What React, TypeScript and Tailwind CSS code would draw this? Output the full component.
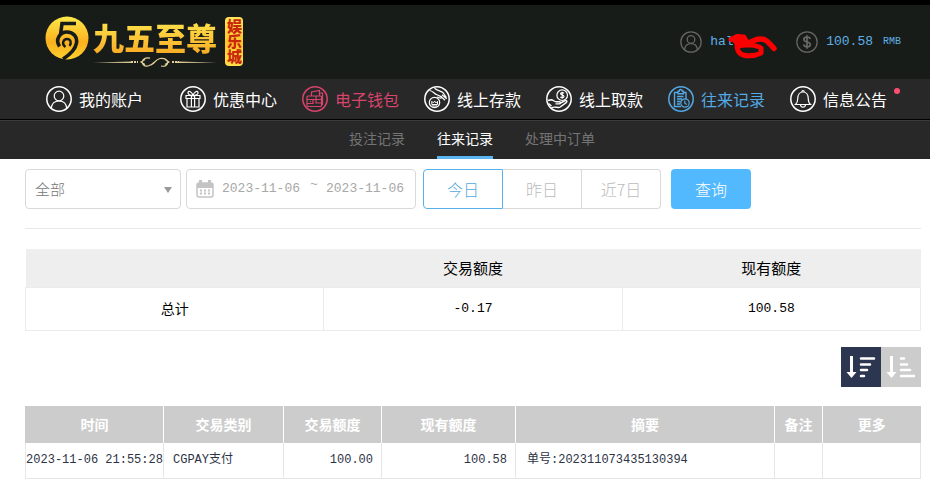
import { useState } from "react";
import type { ReactNode } from "react";

type NavItem = {
  label: string;
  icon: ReactNode;
  className: string;
  dot?: boolean;
};

type RecordRow = {
  time: string;
  type: string;
  amount: string;
  balance: string;
  summary: string;
};

const navItems: NavItem[] = [
  {
    label: "我的账户",
    className: "text-white mr-3",
    icon: (
      <>
        <circle cx="13" cy="10" r="4.8" />
        <path d="M5.2 22.5C5.6 17.8 8.6 15 13 15s7.4 2.8 7.8 7.5" />
      </>
    ),
  },
  {
    label: "优惠中心",
    className: "text-white",
    icon: (
      <>
        <path d="M6 9.5h14v3H6zM7 12.5h12v8.5H7zM11.4 9.5V21M14.6 9.5V21" />
        <path d="M13 9.5C10.5 9.5 7.5 8.5 8 6.4c.6-2.2 4-.6 5 3.1 1-3.7 4.4-5.3 5-3.1.5 2.1-2.5 3.1-5 3.1z" />
      </>
    ),
  },
  {
    label: "电子钱包",
    className: "text-[#d8446c]",
    icon: (
      <>
        <rect x="5" y="10" width="14.5" height="10.5" rx="1" />
        <path d="M9.5 10V6l8-1.500V10M17.500 7H20.500v11.500h-1M5 13.500h6v4H5M14 10v7h5.500M11 13.500h8.500M8.500 15v1" />
      </>
    ),
  },
  {
    label: "线上存款",
    className: "text-white",
    icon: (
      <>
        <circle cx="10.5" cy="16.5" r="5.2" />
        <path d="M7.8 18.5v-3.2l1.6 1.6 1.3-1.8 1.3 1.8 1.5-1.6v3.2zM7.8 20h5.5" strokeWidth="1" />
        <path d="M5.5 4.5c3.5.2 4.500 3.300 7.500 4.300l4 1.800c1.200.8.4 1.800-1 1.400l-3-1M10.500 2.200c3 2.800 6.200 2.500 8.700 4.600l3.200 4.800M17 10.500l4 3.700M18 8.700l4.700 4" />
      </>
    ),
  },
  {
    label: "线上取款",
    className: "text-white",
    icon: (
      <>
        <circle cx="16.2" cy="9.2" r="5.3" />
        <path d="M18 7.4c-.8-1-3.4-1-3.4.4 0 1.6 3.4.9 3.4 2.6 0 1.5-2.8 1.5-3.6.4M16.2 5.8v6.9" strokeWidth="1.200" />
        <path
          d="M2 14.5l3-.8c2.3 0 3 2.1 5 2.1h3.2c1.8.2 1.5 2.1 0 2.1H9.5M14.5 17l4.8-2.3c1.5-.5 2.2 1 .9 1.9l-6 4.4c-2.2 1.3-4.6-.5-7.2.3l-1.7.6M2.5 17.5l3 2.5"
          strokeWidth="1.400"
        />
      </>
    ),
  },
  {
    label: "往来记录",
    className: "text-[#53a9e5]",
    icon: (
      <>
        <path
          d="M13 20.5H6.5V6.5H10M15.5 6.5H18v6.5M10 5.2h1.2c.2-2.2 2.9-2.2 3.1 0h1.2v2.6H10zM9 10.5h6.5M9 13h5M9 15.5h3.5M9 18h3"
          strokeWidth="1.400"
        />
        <circle cx="17" cy="17" r="4.2" />
        <path d="M16.8 14.5v2.7l2 1.3" />
      </>
    ),
  },
  {
    label: "信息公告",
    className: "text-white",
    dot: true,
    icon: (
      <>
        <path d="M5.5 18.5c2-1.7 2.3-3.4 2.3-6.3 0-3.5 2-6.2 5.2-6.2s5.2 2.7 5.2 6.2c0 2.9.3 4.6 2.3 6.3z" />
        <path d="M11.8 6c0-2 2.4-2 2.4 0M10.5 18.7c.3 3.2 4.7 3.2 5 0" />
      </>
    ),
  },
];

const subTabs = ["投注记录", "往来记录", "处理中订单"];
const ranges = ["今日", "昨日", "近7日"];

const records: RecordRow[] = [
  {
    time: "2023-11-06 21:55:28",
    type: "CGPAY支付",
    amount: "100.00",
    balance: "100.58",
    summary: "单号:202311073435130394",
  },
];

function Logo() {
  return (
    <a href="#home" className="flex items-start font-['Noto_Sans_CJK_SC',sans-serif]">
      <svg width="44" height="44" viewBox="0 0 44 44" className="mt-px shrink-0">
        <defs>
          <linearGradient id="gold" x1="0" y1="0" x2="0" y2="1">
            <stop offset="0" stopColor="#ffe94a" />
            <stop offset="0.6" stopColor="#fbb01e" />
            <stop offset="1" stopColor="#ffd22e" />
          </linearGradient>
        </defs>
        <circle cx="22" cy="22" r="21.5" fill="url(#gold)" />
        <path d="M31 7.500H17L15.500 19" fill="none" stroke="#181c18" strokeWidth="3.600" />
        <path
          d="M14.500 30.500C10 24 14.500 16 22 16c6.500 0 10.500 5 9.500 11C30.500 33.500 25 38.500 18 43"
          fill="none"
          stroke="#181c18"
          strokeWidth="3.600"
        />
        <path d="M20.500 31c-4.500-3-2-8 1.500-8s5 3.500 2.500 7" fill="none" stroke="#181c18" strokeWidth="2.400" />
      </svg>
      <div className="ml-1 flex flex-col">
        <span className="bg-gradient-to-b from-[#ffee52] to-[#f6a21b] bg-clip-text text-[31px] leading-[44px] font-black text-transparent">
          九五至尊
        </span>
        <svg width="124" height="10" viewBox="0 0 124 10" fill="none" stroke="#e3cf9b" className="-mt-0.5">
          <path d="M0 5.500L40 4.500v1.500zM124 5.500L84 4.500v1.500z" fill="#e3cf9b" stroke="none" />
          <path d="M38 5h7M79 5h7" strokeWidth="2" strokeDasharray="2 1" />
          <path
            d="M57 1.200c-10-2-10 9-2 7.800 6-1 7-6.500 12-7.500 10-1.500 10 9.500 1 7.500M58 8c4-1 4-5.500 8-6M52 2.500l-4 2.500 4 2.500M72 2.500l4 2.500-4 2.500"
            strokeWidth="1.200"
          />
        </svg>
      </div>
      <span className="mt-0.5 ml-2 flex h-[49px] w-[18px] items-center justify-center rounded-[4px] bg-gradient-to-b from-[#ffe75a] via-[#ffc526] to-[#ffdf4a]">
        <span className="text-[15px] leading-[18px] font-black whitespace-nowrap text-[#c8280c] [writing-mode:vertical-rl]">娱乐城</span>
      </span>
    </a>
  );
}

function SortIcon({ asc }: { asc?: boolean }) {
  return (
    <svg width="30" height="24" viewBox="0 0 30 24" fill="none" stroke="#fff" strokeLinecap="round" strokeWidth="2.500">
      <path d="M5.500 1v17" strokeWidth="3" strokeLinecap="butt" />
      <path d="M.5 17h10l-5 6z" fill="#fff" stroke="none" />
      {asc ? (
        <path d="M15 3.500h3M15 9.500h6M15 15h9M15 21h13" />
      ) : (
        <path d="M15 3.500h13M15 9.500h9M15 15h6M15 21h3" />
      )}
    </svg>
  );
}

export default function App() {
  const [tab, setTab] = useState("往来记录");
  const [range, setRange] = useState("今日");
  const [asc, setAsc] = useState(false);
  const [from, setFrom] = useState("2023-11-06");
  const [to, setTo] = useState("2023-11-06");

  return (
    <div className="bg-white font-['Liberation_Mono','Noto_Sans_CJK_SC',monospace] text-[#333]">
      <header className="border-t-[5px] border-black bg-[#181c18]">
        <div className="flex h-[74px] items-start justify-between pt-[10px] pr-[29px] pl-[45px]">
          <Logo />
          <div className="mt-4 flex items-center text-[13px] leading-[22px] text-[#5fb0e6]">
            <div className="relative flex items-center">
              <svg width="22" height="22" viewBox="0 0 26 26" fill="none" stroke="#656765" strokeWidth="1.500" className="mr-2">
                <circle cx="13" cy="13" r="12" />
                <circle cx="13" cy="10" r="4.500" />
                <path d="M5.500 21.500c.5-4 3.300-6.500 7.500-6.500s7 2.500 7.500 6.500" />
              </svg>
              <span className="w-[86px]">hal</span>
              <svg width="52" height="30" viewBox="0 0 52 30" fill="none" stroke="#fb0000" strokeLinecap="round" strokeLinejoin="round" className="absolute top-0 left-[47px]">
                <path d="M4 8.500l6-3 7 .5 2 4-10 1" strokeWidth="5" />
                <path d="M8 9.500l15 2c5-3 11-5 16-2 3 2 5 4.500 8 8" strokeWidth="5.500" />
                <path d="M10 11c0 6 0 11 6 13 6 1.500 13 .500 18-2v-5c-4-3-16-4-22-2" strokeWidth="5" />
              </svg>
            </div>
            <svg width="22" height="22" viewBox="0 0 26 26" fill="none" stroke="#656765" strokeWidth="1.500" className="mr-2">
              <circle cx="13" cy="13" r="12" />
              <path d="M17 9.500C16 6.500 9.300 6.500 9.300 10c0 4 7.700 2 7.700 6 0 3.500-7 3.500-8 0M13 5v16" strokeWidth="2" />
            </svg>
            <span>100.58</span>
            <span className="ml-2.5 text-[10px]">RMB</span>
          </div>
        </div>
      </header>

      <nav className="flex h-[41px] items-center gap-[25px] border-b border-black bg-[#282828] pl-[46px] font-['Noto_Sans_CJK_SC',sans-serif] text-[16px]">
        {navItems.map((item) => (
          <a key={item.label} href="#nav" className={`relative flex shrink-0 items-center gap-[7px] ${item.className}`}>
            <svg width="26" height="26" viewBox="0 0 26 26" fill="none" stroke="currentColor" strokeWidth="1.200">
              <circle cx="13" cy="13" r="12.200" strokeWidth="1.500" />
              {item.icon}
            </svg>
            <span>{item.label}</span>
            {item.dot && <span className="absolute top-0.5 -right-[13px] size-1.5 rounded-full bg-[#fb5070]" />}
          </a>
        ))}
      </nav>

      <div className="flex h-[39px] justify-center gap-8 border-t border-[#3a3a3a] bg-[#282828] pl-[14px] font-['Noto_Sans_CJK_SC',sans-serif] text-[14px]">
        {subTabs.map((t) => (
          <button
            key={t}
            type="button"
            onClick={() => setTab(t)}
            className={`border-b-[3px] ${t === tab ? "border-[#5cb5f0] text-white" : "border-transparent text-[#747474]"}`}
          >
            {t}
          </button>
        ))}
      </div>

      <main className="pr-[9px] pl-[25px]">
        <div className="flex h-[70px] items-start border-b border-[#e8e8e8] pt-[10px] font-['Noto_Sans_CJK_SC',sans-serif] text-[16px] font-light">
          <div className="relative mr-[5px]">
            <select
              aria-label="交易类别"
              className="h-10 w-[156px] appearance-none rounded-[4px] border border-[#d9d9d9] bg-white pl-[9px] text-[15px] text-[#777]"
            >
              <option>全部</option>
            </select>
            <span className="pointer-events-none absolute top-[18px] right-[9px] border-x-4 border-t-[6px] border-x-transparent border-t-[#999]" />
          </div>
          <div className="mr-[7px] flex h-10 w-[230px] items-center rounded-[4px] border border-[#d9d9d9] pl-[9px] font-['Liberation_Mono',monospace] text-[13px] text-[#a8a8a8]">
            <svg width="18" height="18" viewBox="0 0 18 18" className="mr-2 shrink-0">
              <rect x="1" y="3" width="16" height="14" rx="2" fill="none" stroke="#c4c4c4" strokeWidth="1.500" />
              <path d="M1 3h16v5H1zM3 0h3v5H3zM12 0h3v5h-3z" fill="#c4c4c4" />
              <path d="M4 10.500h10M4 13.500h10" stroke="#c4c4c4" strokeWidth="2" strokeDasharray="2 2" />
            </svg>
            <input aria-label="开始日期" value={from} onChange={(e) => setFrom(e.target.value)} className="w-20 bg-transparent outline-none" />
            <span className="w-6 pb-2 text-center">~</span>
            <input aria-label="结束日期" value={to} onChange={(e) => setTo(e.target.value)} className="w-20 bg-transparent outline-none" />
          </div>
          <div className="mr-[10px] flex">
            {ranges.map((r) => (
              <button
                key={r}
                type="button"
                onClick={() => setRange(r)}
                className={`h-10 border first:w-20 first:rounded-l-[4px] last:rounded-r-[4px] not-first:w-[79px] not-first:border-l-0 ${
                  r === range ? "border-[#5ab0ea] text-[#53a9e0]" : "border-[#d9d9d9] text-[#bbb]"
                }`}
              >
                {r}
              </button>
            ))}
          </div>
          <button type="button" className="h-10 w-20 rounded-[4px] bg-[#52b9ff] text-white">
            查询
          </button>
        </div>

        <table className="mt-5 w-full table-fixed border-collapse text-center text-[15px] text-black">
          <thead>
            <tr className="h-[38px] bg-[#eee] font-['Noto_Sans_CJK_SC',sans-serif]">
              <th className="font-normal" />
              <th className="font-normal">交易额度</th>
              <th className="font-normal">现有额度</th>
            </tr>
          </thead>
          <tbody>
            <tr className="h-[43px]">
              <td className="border border-[#ebebeb] font-['Noto_Sans_CJK_SC',sans-serif] text-[14px]">总计</td>
              <td className="border border-[#ebebeb] text-[13px]">-0.17</td>
              <td className="border border-[#ebebeb] text-[13px]">100.58</td>
            </tr>
          </tbody>
        </table>

        <div className="mt-4 flex justify-end">
          <button
            type="button"
            aria-label="降序"
            onClick={() => setAsc(false)}
            className={`flex size-10 items-center justify-center ${asc ? "bg-[#ccc]" : "bg-[#2d3650]"}`}
          >
            <SortIcon />
          </button>
          <button
            type="button"
            aria-label="升序"
            onClick={() => setAsc(true)}
            className={`flex size-10 items-center justify-center ${asc ? "bg-[#2d3650]" : "bg-[#ccc]"}`}
          >
            <SortIcon asc />
          </button>
        </div>

        <table className="mt-[19px] w-full table-fixed border-collapse text-[12px] whitespace-nowrap">
          <colgroup>
            <col className="w-[138px]" />
            <col className="w-[120px]" />
            <col className="w-[98px]" />
            <col className="w-[134px]" />
            <col />
            <col className="w-[48px]" />
            <col className="w-[98px]" />
          </colgroup>
          <thead>
            <tr className="h-[37px] bg-[#ccc] font-['Noto_Sans_CJK_SC',sans-serif] text-[14px] text-white">
              {["时间", "交易类别", "交易额度", "现有额度", "摘要", "备注", "更多"].map((h) => (
                <th key={h} className="border-r border-white font-bold first:border-l first:border-l-[#ccc] last:border-r-0">
                  {h}
                </th>
              ))}
            </tr>
          </thead>
          <tbody>
            {records.map((r) => (
              <tr key={r.summary} className="h-9 border-b border-[#e6e6e6] text-[#2d3345] *:border-x *:border-[#e6e6e6]">
                <td className="text-center">{r.time}</td>
                <td className="pl-[9px]">{r.type}</td>
                <td className="pr-2 text-right">{r.amount}</td>
                <td className="pr-2 text-right">{r.balance}</td>
                <td className="pl-[11px]">{r.summary}</td>
                <td />
                <td />
              </tr>
            ))}
          </tbody>
        </table>
      </main>
    </div>
  );
}
